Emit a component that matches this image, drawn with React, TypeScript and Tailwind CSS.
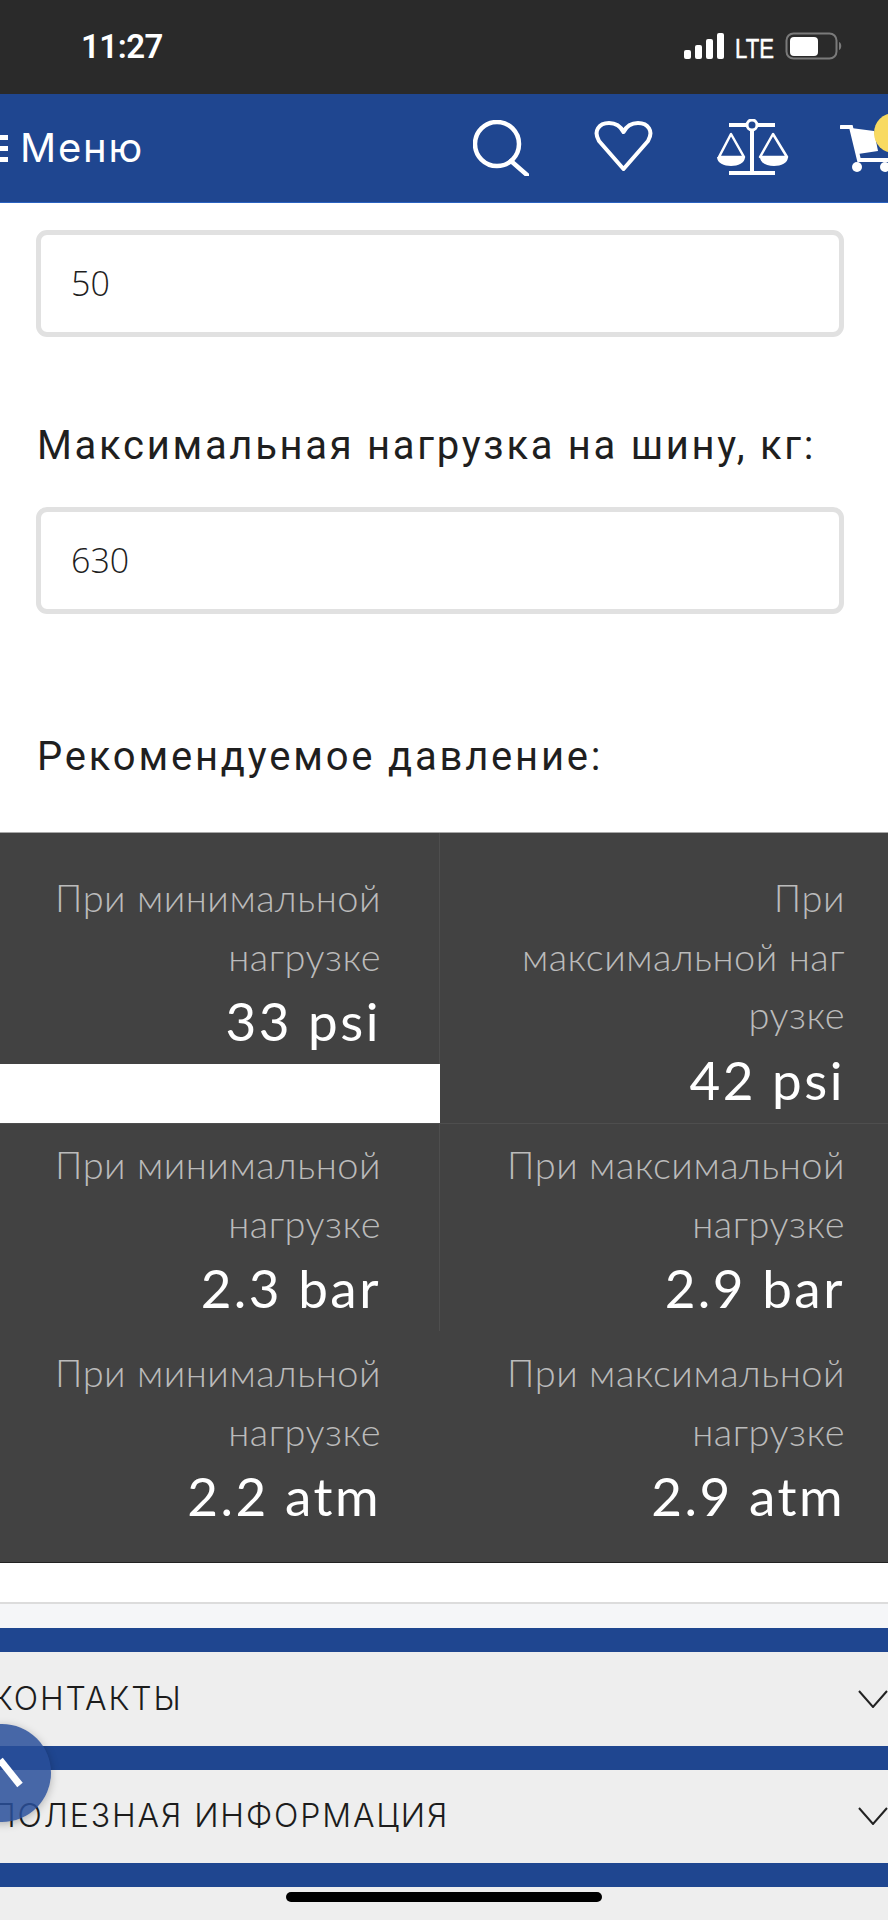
const blue = "bg-[#1f4690]";

function Cell({ label, value, className }: { label: string[]; value: string; className: string }) {
  return (
    <div className={"text-right font-['Lato',sans-serif] " + className}>
      {label.map((l) => (
        <div key={l} className="h-[58.5px] whitespace-nowrap text-[38px] leading-[58.5px] font-light tracking-[0.5px] text-[#bbbbbb]">
          {l}
        </div>
      ))}
      <div className="mt-[2px] h-[67px] whitespace-nowrap text-[53px] leading-[67px] font-normal tracking-[2.5px] text-white">{value}</div>
    </div>
  );
}

function Field({ value }: { value: string }) {
  return (
    <div className="ml-[36px] flex h-[107px] w-[808px] items-center rounded-[11px] border-[5px] border-[#e1e1e1] bg-white pl-[30px] font-['Open_Sans',sans-serif] text-[34px] font-light text-[#1e1e1e]">
      {value}
    </div>
  );
}

function Chevron() {
  return (
    <svg width="30" height="18" viewBox="0 0 30 18" fill="none" className="shrink-0">
      <path d="M1 1 L15 17 L29 1" stroke="#222" strokeWidth="2" />
    </svg>
  );
}

function FooterRow({ text }: { text: string }) {
  return (
    <div className="flex h-[93.5px] items-center justify-between bg-[#eeeeee] pr-0">
      <span className="ml-[-8px] whitespace-nowrap font-['Inter',sans-serif] text-[32px] font-light tracking-[1.9px] text-[#1c1c1c]">{text}</span>
      <Chevron />
    </div>
  );
}

export default function App() {
  return (
    <div className="relative h-[1920px] w-[888px] overflow-hidden bg-white">
      <div className="relative flex h-[94px] items-center bg-[#2a2a2a] pl-[81px]">
        <span className="font-['Roboto',sans-serif] text-[33px] font-semibold tracking-[-0.5px] text-white">11:27</span>
        <svg width="160" height="30" viewBox="0 0 160 30" fill="none" className="ml-auto mr-[44px]">
          <rect x="0" y="18" width="7" height="9" rx="2" fill="#fff" />
          <rect x="11" y="13" width="7" height="14" rx="2" fill="#fff" />
          <rect x="22" y="7" width="7" height="20" rx="2" fill="#fff" />
          <rect x="33" y="1" width="7" height="26" rx="2" fill="#fff" />
          <rect x="102.5" y="1.5" width="50" height="25" rx="7" stroke="#7a7a7a" strokeWidth="2" />
          <rect x="106" y="5" width="28" height="19" rx="4" fill="#fff" />
          <path d="M155 10 C158 11 158 17 155 18 Z" fill="#7a7a7a" />
          <text x="51" y="26" fontFamily="'Liberation Sans', sans-serif" fontSize="28" fill="#fff" stroke="#fff" strokeWidth="0.5" textLength="39" lengthAdjust="spacingAndGlyphs">LTE</text>
        </svg>
      </div>

      <div className={"flex h-[109px] items-center overflow-hidden border-b border-[#2a62c0] " + blue}>
        <svg width="9" height="28" viewBox="0 0 9 28" className="mt-[2px] shrink-0">
          <rect x="0" y="0" width="8" height="5" fill="#fff" />
          <rect x="0" y="11" width="8" height="5" fill="#fff" />
          <rect x="0" y="22" width="8" height="5" fill="#fff" />
        </svg>
        <span className="ml-[11px] w-[123px] shrink-0 whitespace-nowrap font-['Inter',sans-serif] text-[40px] font-normal tracking-[1.8px] text-white">Меню</span>
        <svg width="56" height="56" viewBox="0 0 56 56" fill="none" className="ml-[330px] shrink-0">
          <circle cx="24" cy="24" r="22" stroke="#fff" strokeWidth="4.5" />
          <path d="M38 41 L54 55" stroke="#fff" strokeWidth="4.5" strokeLinecap="round" />
        </svg>
        <svg width="59" height="50" viewBox="0 0 59 50" fill="none" className="ml-[65px] mt-[-4px] shrink-0">
          <path d="M29.5 48 L5 20 C-1 10 5 2 15 2 C22 2 27 6 29.5 11 C32 6 37 2 44 2 C54 2 60 10 54 20 Z" stroke="#fff" strokeWidth="4" strokeLinejoin="round" />
        </svg>
        <svg width="72" height="58" viewBox="0 0 72 58" fill="none" className="ml-[64px] shrink-0">
          <path d="M12 6 H58" stroke="#fff" strokeWidth="4" />
          <path d="M35 10 V52" stroke="#fff" strokeWidth="4" />
          <circle cx="35" cy="6" r="5" fill="#1f4690" stroke="#fff" strokeWidth="3" />
          <path d="M12 56 H58" stroke="#fff" strokeWidth="4" transform="translate(0 -2)" />
          <path d="M14 15 L2 38 H27 Z" stroke="#fff" strokeWidth="2.5" strokeLinejoin="round" />
          <path d="M56 15 L43 38 H70 Z" stroke="#fff" strokeWidth="2.5" strokeLinejoin="round" />
          <path d="M0 38 H28 C28 44 21 47 14 47 C7 47 0 44 0 38 Z" fill="#fff" />
          <path d="M43 38 H71 C71 44 64 47 57 47 C50 47 43 44 43 38 Z" fill="#fff" />
        </svg>
        <div className="relative ml-[51px] h-[56px] w-[49px] shrink-0">
          <svg width="60" height="56" viewBox="0 0 60 56" fill="none">
            <path d="M1 7 H11 L19 40 H60" stroke="#fff" strokeWidth="4" strokeLinecap="round" />
            <path d="M11 8 L34 11 L38 31 L18 34 Z" fill="#fff" />
            <circle cx="17" cy="47" r="5" fill="#fff" />
            <circle cx="45" cy="47" r="5" fill="#fff" />
          </svg>
          <div className="absolute left-[34px] top-[-7px] h-[40px] w-[40px] rounded-full bg-[#f8da62]" />
        </div>
      </div>

      <div className="h-[27px]" />
      <Field value="50" />
      <div className="flex h-[170px] items-center px-[37px] pt-[47px] font-['Roboto',sans-serif] text-[40px] whitespace-nowrap tracking-[2.7px] text-[#1f1f1f]">
        Максимальная нагрузка на шину, кг:
      </div>
      <Field value="630" />
      <div className="flex h-[218px] items-end px-[37px] pb-[45px] font-['Roboto',sans-serif] text-[40px] whitespace-nowrap tracking-[2.8px] text-[#1f1f1f]">
        Рекомендуемое давление:
      </div>

      <div className="border-t border-[#a8a8a8]">
        <div className="flex items-start">
          <Cell className="h-[231px] w-[440px] border-r border-[#4e4e4e] bg-[#424242] pt-[35px] pr-[58px]" label={["При минимальной", "нагрузке"]} value="33 psi" />
          <Cell className="h-[290px] w-[448px] bg-[#424242] pt-[35px] pr-[43px]" label={["При", "максимальной наг", "рузке"]} value="42 psi" />
        </div>
        <div className="flex border-t border-[#4e4e4e] bg-[#424242]">
          <Cell className="h-[207px] w-[440px] border-r border-[#4e4e4e] pt-[11px] pr-[58px]" label={["При минимальной", "нагрузке"]} value="2.3 bar" />
          <Cell className="h-[207px] w-[448px] pt-[11px] pr-[43px]" label={["При максимальной", "нагрузке"]} value="2.9 bar" />
        </div>
        <div className="flex border-b border-[#222] bg-[#424242]">
          <Cell className="h-[231px] w-[440px] pt-[12px] pr-[59px]" label={["При минимальной", "нагрузке"]} value="2.2 atm" />
          <Cell className="h-[231px] w-[448px] pt-[12px] pr-[43px]" label={["При максимальной", "нагрузке"]} value="2.9 atm" />
        </div>
      </div>

      <div className="h-[39px]" />
      <div className="h-[26px] border-t-2 border-[#dcdcdc] bg-[#f5f6f8]" />
      <div className={"h-[24px] " + blue} />
      <FooterRow text="КОНТАКТЫ" />
      <div className={"h-[24px] " + blue} />
      <FooterRow text="ПОЛЕЗНАЯ ИНФОРМАЦИЯ" />
      <div className={"h-[24px] " + blue} />
      <div className="h-[33px] bg-[#eeeeee]" />

      <div className="absolute bottom-[18px] left-[286px] h-[10px] w-[316px] rounded-full bg-black" />
      <div className="absolute left-[-47px] top-[1724px] flex h-[98px] w-[98px] items-center justify-center rounded-full bg-[#294f9a]/85 shadow-[0_2px_8px_rgba(0,0,0,0.25)]">
        <svg width="98" height="98" viewBox="0 0 98 98" fill="none">
          <path d="M47 36 L67 61" stroke="#fff" strokeWidth="7" />
        </svg>
      </div>
    </div>
  );
}
